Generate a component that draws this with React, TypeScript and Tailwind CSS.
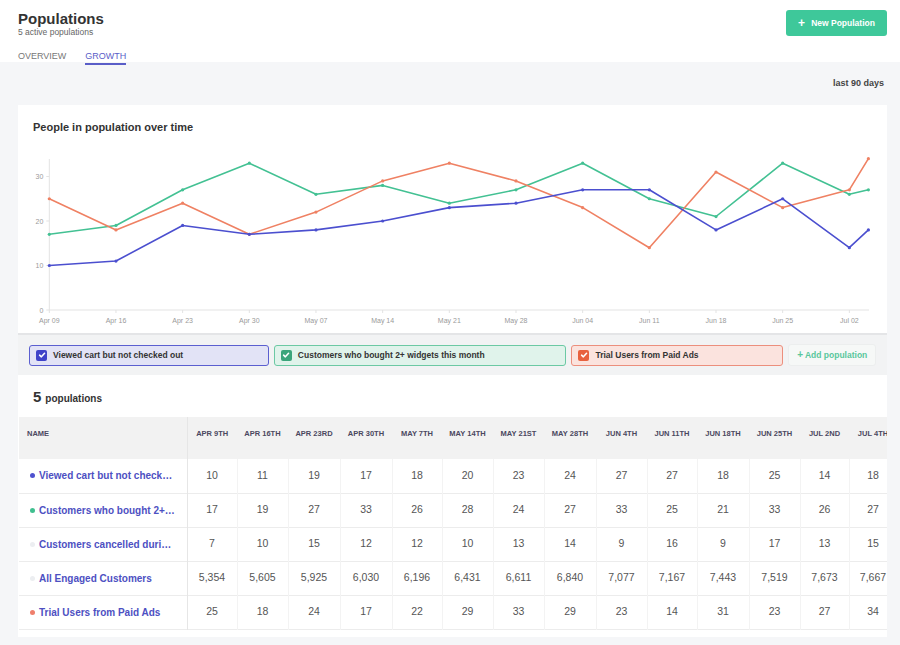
import React from 'react';

const blue = [10, 11, 19, 17, 18, 20, 23, 24, 27, 27, 18, 25, 14, 18];
const green = [17, 19, 27, 33, 26, 28, 24, 27, 33, 25, 21, 33, 26, 27];
const orange = [25, 18, 24, 17, 22, 29, 33, 29, 23, 14, 31, 23, 27, 34];

const weekLabels = ['Apr 09', 'Apr 16', 'Apr 23', 'Apr 30', 'May 07', 'May 14', 'May 21', 'May 28', 'Jun 04', 'Jun 11', 'Jun 18', 'Jun 25', 'Jul 02'];

const columns = [
    { label: 'APR 9TH', w: 'w-[50px]' },
    { label: 'APR 16TH', w: 'w-[51px]' },
    { label: 'APR 23RD', w: 'w-[52px]' },
    { label: 'APR 30TH', w: 'w-[52px]' },
    { label: 'MAY 7TH', w: 'w-[50px]' },
    { label: 'MAY 14TH', w: 'w-[51px]' },
    { label: 'MAY 21ST', w: 'w-[51px]' },
    { label: 'MAY 28TH', w: 'w-[52px]' },
    { label: 'JUN 4TH', w: 'w-[51px]' },
    { label: 'JUN 11TH', w: 'w-[50px]' },
    { label: 'JUN 18TH', w: 'w-[52px]' },
    { label: 'JUN 25TH', w: 'w-[51px]' },
    { label: 'JUL 2ND', w: 'w-[49px]' },
    { label: 'JUL 4TH', w: 'w-[48px]' },
];

const rows = [
    { name: 'Viewed cart but not check…', dot: 'bg-[#4f52cf]', values: blue.map(String) },
    { name: 'Customers who bought 2+…', dot: 'bg-[#3fbf8f]', values: green.map(String) },
    { name: 'Customers cancelled duri…', dot: 'bg-[#eceef1]', values: ['7', '10', '15', '12', '12', '10', '13', '14', '9', '16', '9', '17', '13', '15'] },
    { name: 'All Engaged Customers', dot: 'bg-[#eceef1]', values: ['5,354', '5,605', '5,925', '6,030', '6,196', '6,431', '6,611', '6,840', '7,077', '7,167', '7,443', '7,519', '7,673', '7,667'] },
    { name: 'Trial Users from Paid Ads', dot: 'bg-[#ef7f6c]', values: orange.map(String) },
];

// chart geometry (svg coords)
const x0 = 31.3;
const week = 66.67;
const xAt = (i: number) => (i < 13 ? x0 + week * i : x0 + week * 12 + week * 2 / 7);
const yAt = (v: number) => 172 - 4.45 * v;

function Series({ data, color }: { data: number[]; color: string }) {
    const pts = data.map((v, i) => `${xAt(i).toFixed(1)},${yAt(v).toFixed(1)}`).join(' ');
    return (
        <g>
            <polyline points={pts} fill="none" stroke={color} strokeWidth={1.6} strokeLinejoin="round" />
            {data.map((v, i) => (
                <circle key={i} cx={xAt(i)} cy={yAt(v)} r={1.6} fill={color} />
            ))}
        </g>
    );
}

function Chart() {
    return (
        <svg width={869} height={195} className="block">
            {/* axes */}
            <line x1={x0} y1={21} x2={x0} y2={172} stroke="#e3e3e3" strokeWidth={1} />
            <line x1={x0} y1={172} x2={851} y2={172} stroke="#e3e3e3" strokeWidth={1} />
            {[0, 10, 20, 30].map(v => (
                <g key={v}>
                    <line x1={x0 - 3} y1={yAt(v)} x2={x0} y2={yAt(v)} stroke="#e3e3e3" />
                    <text x={x0 - 6} y={yAt(v) + 2.5} textAnchor="end" fontSize={7} fill="#9a9a9a">{v}</text>
                </g>
            ))}
            {weekLabels.map((l, i) => (
                <g key={l}>
                    <line x1={xAt(i)} y1={172} x2={xAt(i)} y2={175} stroke="#e3e3e3" />
                    <text x={xAt(i)} y={185} textAnchor="middle" fontSize={7} fill="#9a9a9a">{l}</text>
                </g>
            ))}
            <Series data={green} color="#43c193" />
            <Series data={orange} color="#ef8163" />
            <Series data={blue} color="#4b4fcf" />
        </svg>
    );
}

function Check({ color }: { color: string }) {
    return (
        <span className={`flex h-[11px] w-[11px] items-center justify-center rounded-[2px] ${color}`}>
            <svg width="8" height="8" viewBox="0 0 10 10" fill="none">
                <path d="M2 5.2 L4.2 7.3 L8.2 2.8" stroke="white" strokeWidth={1.9} strokeLinecap="round" strokeLinejoin="round" />
            </svg>
        </span>
    );
}

export default function App() {
    return (
        <div className="h-[645px] w-full overflow-hidden bg-[#f5f6f8] font-['Liberation_Sans',Arial,sans-serif] text-[#333]">
            {/* Header */}
            <header className="flex h-[62px] justify-between bg-white pl-[18px] pr-[13px] pt-[10px]">
                <div>
                    <h1 className="text-[15px] font-bold leading-[17px] text-[#333]">Populations</h1>
                    <p className="text-[8.5px] leading-[10px] text-[#666]">5 active populations</p>
                    <nav className="mt-[14px] flex gap-[19px] text-[9px] leading-[11px]">
                        <span className="text-[#777]">OVERVIEW</span>
                        <span className="border-b-2 border-[#5a5ec8] pb-[1px] text-[#5a5ec8]">GROWTH</span>
                    </nav>
                </div>
                <button className="flex h-[26px] w-[101px] items-center justify-center gap-[6px] rounded-[3px] bg-[#3ec89a] text-[8.5px] font-bold text-white">
                    <span className="text-[12px] leading-none">+</span>
                    New Population
                </button>
            </header>

            <main className="px-[18px]">
                <div className="flex h-[43px] w-[869px] items-center justify-end pr-[3px] pt-[1px] text-[9px] font-bold text-[#444]">last 90 days</div>

                {/* Chart card */}
                <section className="w-[869px] bg-white">
                    <h2 className="px-[15px] pt-[15px] pb-[4px] text-[11px] font-bold leading-[14px] text-[#333]">People in population over time</h2>
                    <Chart />
                </section>
                <div className="h-[2px] w-[869px] bg-[#e4e5e7]" />

                {/* Legend */}
                <div className="flex h-[40px] w-[869px] items-center gap-[5px] bg-[#f2f3f4] px-[11px]">
                    <div className="flex h-[21px] w-[241px] items-center gap-[6px] rounded-[3px] border border-[#5b5fd0] bg-[#e2e3f6] px-[6px] text-[8.5px] font-bold text-[#333]">
                        <Check color="bg-[#3f43c9]" />
                        Viewed cart but not checked out
                    </div>
                    <div className="flex h-[21px] w-[294px] items-center gap-[6px] rounded-[3px] border border-[#6cc9a4] bg-[#e0f3eb] px-[6px] text-[8.5px] font-bold text-[#333]">
                        <Check color="bg-[#3aa57b]" />
                        Customers who bought 2+ widgets this month
                    </div>
                    <div className="flex h-[21px] w-[213px] items-center gap-[6px] rounded-[3px] border border-[#ec8f7d] bg-[#fbe3de] px-[6px] text-[8.5px] font-bold text-[#333]">
                        <Check color="bg-[#e8623f]" />
                        Trial Users from Paid Ads
                    </div>
                    <div className="flex h-[22px] w-[88px] items-center justify-center rounded-[3px] border border-[#eceeee] bg-[#f6f8f7] text-[8.5px] font-bold text-[#59c79c]">
                        <span className="mr-[2px] text-[10px] leading-none">+</span>Add population
                    </div>
                </div>

                {/* Table card */}
                <section className="h-[262px] w-[869px] overflow-hidden bg-white">
                    <div className="flex items-baseline gap-[4px] px-[15px] pt-[13px] pb-[11px]">
                        <span className="text-[15px] font-bold leading-[18px] text-[#333]">5</span>
                        <span className="text-[10px] font-bold text-[#333]">populations</span>
                    </div>
                    <div className="w-[869px] overflow-hidden pl-[1px]">
                        <table className="w-[878px] table-fixed border-collapse text-[10px]">
                            <thead>
                                <tr className="h-[42px] bg-[#f2f2f2]">
                                    <th className="w-[168px] border-r border-[#e6e6e6] px-[8px] pt-[11px] text-left align-top text-[7.5px] font-bold text-[#4a4860]">NAME</th>
                                    {columns.map(c => (
                                        <th key={c.label} className={`${c.w} whitespace-nowrap pt-[11px] text-center align-top text-[7.5px] font-bold text-[#4a4860]`}>{c.label}</th>
                                    ))}
                                </tr>
                            </thead>
                            <tbody>
                                {rows.map(r => (
                                    <tr key={r.name} className="h-[34px] border-b border-[#ececec]">
                                        <td className="overflow-hidden border-r border-[#e6e6e6] pl-[11px]">
                                            <div className="flex items-center gap-[4px] whitespace-nowrap text-[10px] font-bold text-[#4d50c2]">
                                                <span className={`h-[5px] w-[5px] shrink-0 rounded-full ${r.dot}`} />
                                                {r.name}
                                            </div>
                                        </td>
                                        {r.values.map((v, i) => (
                                            <td key={i} className="whitespace-nowrap border-r border-[#f3f3f3] text-center text-[10.5px] text-[#555]">{v}</td>
                                        ))}
                                    </tr>
                                ))}
                            </tbody>
                        </table>
                    </div>
                </section>
            </main>
        </div>
    );
}
